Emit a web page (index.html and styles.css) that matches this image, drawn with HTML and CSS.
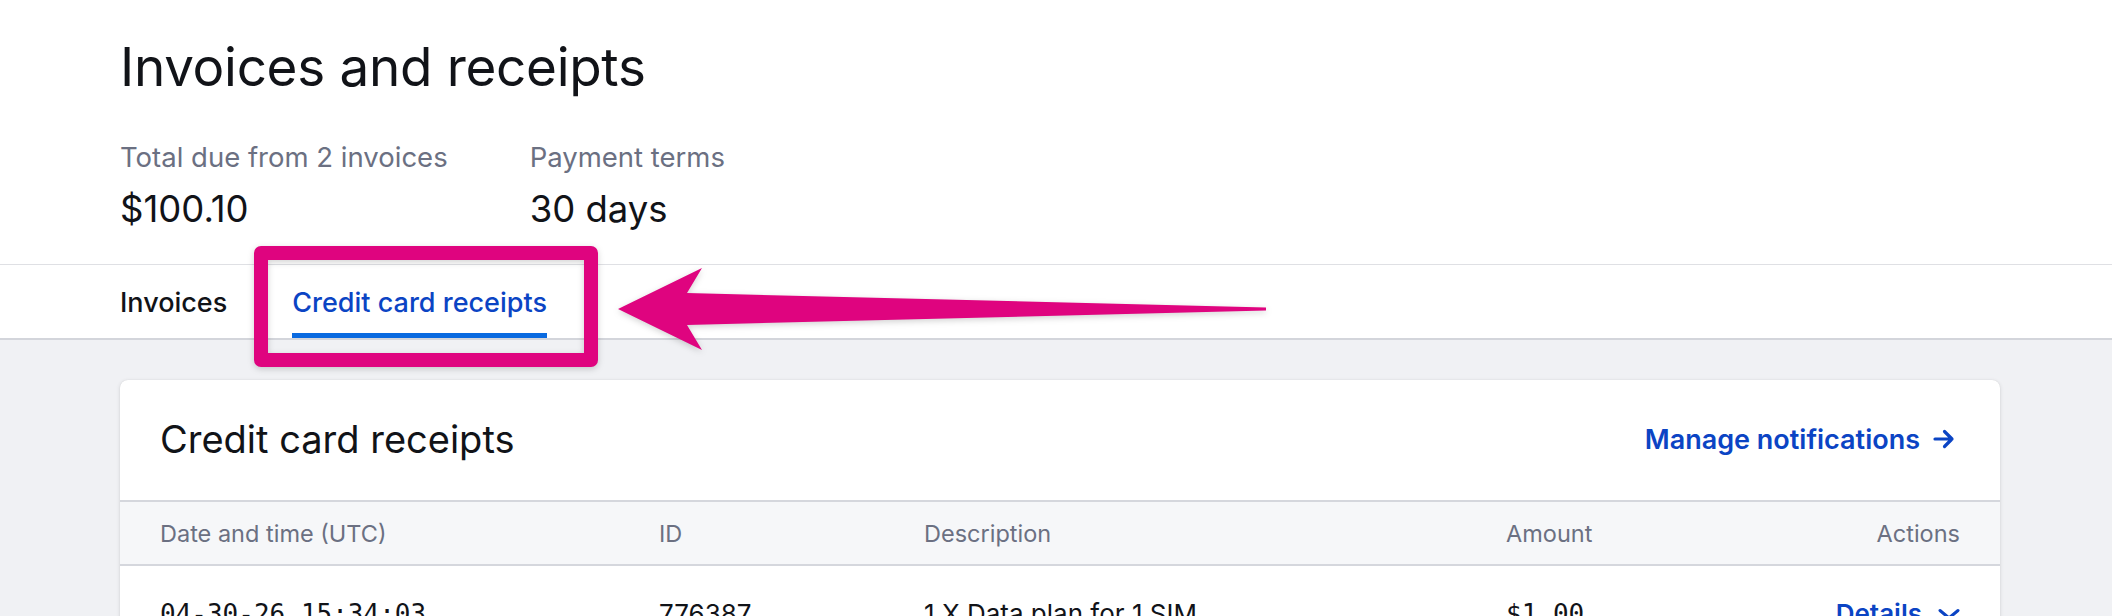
FILE: index.html
```html
<!DOCTYPE html>
<html lang="en">
<head>
<meta charset="UTF-8">
<meta name="viewport" content="width=device-width, initial-scale=1.0">
<title>Invoices and receipts</title>
<link rel="stylesheet" href="styles.css">
</head>
<body>
<header class="page-header">
    <h1 class="page-title">Invoices and receipts</h1>
    <div class="summary">
        <div class="summary-item">
            <div class="summary-label">Total due from 2 invoices</div>
            <div class="summary-value">$100.10</div>
        </div>
        <div class="summary-item">
            <div class="summary-label">Payment terms</div>
            <div class="summary-value">30 days</div>
        </div>
    </div>
</header>

<nav class="tabs">
    <a class="tab" href="#">Invoices</a>
    <a class="tab active" href="#">Credit card receipts</a>
</nav>

<main class="content">
    <section class="card">
        <div class="card-header">
            <h2 class="card-title">Credit card receipts</h2>
            <a class="card-link" href="#">Manage notifications
                <svg class="link-arrow" width="24" height="22" viewBox="0 0 24 22" fill="none" stroke="currentColor" stroke-width="3.2" stroke-linecap="round" stroke-linejoin="round">
                    <path d="M3 11h17M12.5 3.5 20 11l-7.5 7.5"/>
                </svg>
            </a>
        </div>
        <table class="receipts">
            <colgroup>
                <col class="col-date">
                <col class="col-id">
                <col class="col-desc">
                <col class="col-amount">
                <col class="col-actions">
            </colgroup>
            <thead>
                <tr>
                    <th>Date and time (UTC)</th>
                    <th>ID</th>
                    <th>Description</th>
                    <th>Amount</th>
                    <th>Actions</th>
                </tr>
            </thead>
            <tbody>
                <tr>
                    <td class="mono">04-30-26 15:34:03</td>
                    <td class="receipt-id">776387</td>
                    <td class="receipt-desc">1 X Data plan for 1 SIM</td>
                    <td class="mono">$1.00</td>
                    <td><a class="details" href="#">Details
                        <svg width="22" height="20" viewBox="0 0 22 20" fill="none" stroke="currentColor" stroke-width="3" stroke-linecap="round" stroke-linejoin="round">
                            <path d="M2 6.5l9 7.5 9-7.5"/>
                        </svg></a></td>
                </tr>
            </tbody>
        </table>
    </section>
</main>

<!-- annotation layer drawn over the screenshot -->
<svg class="annotation" width="2112" height="616" viewBox="0 0 2112 616">
    <rect x="261" y="253" width="330" height="107" fill="none" stroke="#df047f" stroke-width="14" stroke-linejoin="round"/>
    <polygon fill="#df047f" points="618,309 702,268 687,293 1266,307.5 1266,310.5 687,325 702,350"/>
</svg>
</body>
</html>
```

FILE: styles.css
```css
body {
    margin: 0;
    font-family: Inter, "Noto Sans", sans-serif;
    color: #111318;
    background-color: #f0f1f4;
}

.page-header {
    background-color: #fff;
    padding: 35px 120px 33px;
    border-bottom: 1px solid #dfe0e4;
}

.page-title {
    margin: 0;
    font-size: 53px;
    line-height: 64px;
    font-weight: 400;
    letter-spacing: -0.3px;
}

.summary {
    display: flex;
    gap: 82px;
    margin-top: 41px;
}

.summary-label {
    font-size: 27.5px;
    line-height: 34px;
    color: #6b7082;
}

.summary-value {
    margin-top: 13px;
    font-size: 36.5px;
    line-height: 44px;
}

.tabs {
    display: flex;
    gap: 65px;
    padding: 0 120px;
    background-color: #fff;
    border-bottom: 2px solid #d3d5db;
}

.tab {
    padding: 22px 0 14px;
    font-size: 27px;
    line-height: 32px;
    font-weight: 500;
    color: #111318;
    text-decoration: none;
    border-bottom: 5px solid transparent;
}

.tab.active {
    color: #0b44c4;
    border-bottom-color: #0a6ae0;
}

.content {
    padding: 40px 112px 40px 120px;
    min-height: 300px;
}

.card {
    background-color: #fff;
    border-radius: 8px;
    box-shadow: 0 1px 4px rgba(0, 0, 0, 0.12), 0 0 1px rgba(0, 0, 0, 0.12);
    overflow: hidden;
}

.card-header {
    display: flex;
    justify-content: space-between;
    align-items: center;
    padding: 36px 40px 38px;
    border-bottom: 2px solid #d5d7dd;
}

.card-title {
    margin: 0;
    font-size: 38px;
    line-height: 46px;
    font-weight: 400;
}

.card-link {
    display: flex;
    align-items: center;
    gap: 12px;
    margin-right: 4px;
    font-size: 27px;
    font-weight: 600;
    color: #0b44c4;
    text-decoration: none;
}

.receipts {
    width: 100%;
    border-collapse: collapse;
    table-layout: fixed;
}

.col-date { width: 539px; }
.col-id { width: 265px; }
.col-desc { width: 582px; }
.col-amount { width: 250px; }
.col-actions { width: 244px; }

.receipts th {
    height: 62px;
    padding: 0;
    background-color: #f6f7f9;
    border-bottom: 2px solid #d5d7dd;
    font-size: 23.5px;
    font-weight: 400;
    color: #6b7082;
    text-align: left;
}

.receipts td {
    padding: 30px 0;
    font-size: 26px;
    line-height: 36px;
}

.receipts th:first-child,
.receipts td:first-child {
    padding-left: 40px;
}

.receipts th:last-child,
.receipts td:last-child {
    padding-right: 40px;
    text-align: right;
}

.mono {
    font-family: "DejaVu Sans Mono", "Liberation Mono", monospace;
    font-size: 26px;
}

.receipt-id {
    font-size: 22px;
}

.receipt-desc {
    font-size: 27px;
}

.details {
    display: inline-flex;
    align-items: center;
    gap: 16px;
    font-weight: 600;
    color: #0b44c4;
    text-decoration: none;
}

.annotation {
    position: absolute;
    top: 0;
    left: 0;
    pointer-events: none;
    filter: drop-shadow(0 2px 3px rgba(0, 0, 0, 0.18));
}
```
